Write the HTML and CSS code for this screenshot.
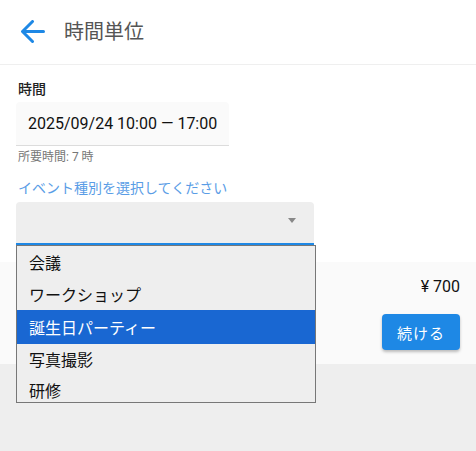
FILE: index.html
```html
<!DOCTYPE html>
<html lang="ja">
<head>
<meta charset="utf-8">
<link rel="stylesheet" href="styles.css">
</head>
<body>
<div class="page">
  <header class="topbar">
    <svg class="back" width="24" height="24" viewBox="0 0 24 24" aria-hidden="true">
      <path d="M2 11.5H22.5M11.5 1.5L1.5 11.5L11.5 21.5" fill="none" stroke="#1e88e5" stroke-width="3" stroke-linecap="round" stroke-linejoin="round"/>
    </svg>
    <h1 class="title">時間単位</h1>
  </header>

  <main class="content">
    <label class="field-label">時間</label>
    <div class="time-box">2025/09/24 10:00 — 17:00</div>
    <div class="helper">所要時間: 7 時</div>

    <div class="event-label">イベント種別を選択してください</div>
    <div class="select-wrap">
      <div class="select">
        <span class="caret"></span>
      </div>
      <ul class="dropdown">
        <li class="option">会議</li>
        <li class="option">ワークショップ</li>
        <li class="option is-selected">誕生日パーティー</li>
        <li class="option">写真撮影</li>
        <li class="option">研修</li>
      </ul>
    </div>
  </main>

  <section class="footer">
    <div class="price">¥ 700</div>
    <button class="continue">続ける</button>
  </section>
  <div class="filler"></div>
</div>
</body>
</html>
```

FILE: styles.css
```css
* { box-sizing: border-box; }
html, body {
  margin: 0;
  padding: 0;
  background: #eeeeee;
  font-family: Roboto, "Noto Sans CJK JP", sans-serif;
  color: #111;
}
.page {
  width: 476px;
  min-height: 451px;
  display: flex;
  flex-direction: column;
  background: #eeeeee;
}
.topbar {
  height: 65px;
  flex: none;
  background: #fff;
  border-bottom: 1px solid #efefef;
  display: flex;
  align-items: center;
  padding-left: 21px;
}
.back {
  display: block;
  margin-top: -1px;
}
.title {
  margin: 0 0 0 19px;
  font-size: 20px;
  font-weight: 400;
  color: #555;
  line-height: 28px;
}
.content {
  flex: none;
  background: #fff;
  padding: 14px 16px 17px;
}
.field-label {
  display: block;
  margin-left: 2px;
  font-size: 14px;
  line-height: 20px;
  font-weight: 500;
  color: #222;
  margin-bottom: 3px;
}
.time-box {
  display: inline-block;
  height: 44px;
  padding: 0 12px;
  line-height: 43px;
  font-size: 16px;
  background: #fafafa;
  border-bottom: 1px solid #dcdcdc;
  border-radius: 4px 4px 0 0;
  color: #111;
}
.helper {
  margin: 3px 0 0 2px;
  font-size: 12px;
  line-height: 16px;
  color: #777;
}
.event-label {
  margin: 13px 0 0 2px;
  font-size: 14px;
  line-height: 20px;
  color: #5a9de6;
}
.select-wrap {
  position: relative;
  width: 298px;
  margin-top: 4px;
  z-index: 10;
}
.select {
  height: 43px;
  background: #eeeeee;
  border-radius: 4px 4px 0 0;
  border-bottom: 2px solid #1e88e5;
  position: relative;
}
.caret {
  position: absolute;
  right: 18px;
  top: 16px;
  width: 0;
  height: 0;
  border-left: 4px solid transparent;
  border-right: 4px solid transparent;
  border-top: 5px solid #888;
}
.dropdown {
  position: absolute;
  left: 0;
  top: 43px;
  width: 300px;
  height: 158px;
  margin: 0;
  padding: 0;
  list-style: none;
  background: #eeeeee;
  border: 1px solid #777;
  overflow: hidden;
  font-family: "Noto Sans CJK JP", sans-serif;
}
.option {
  height: 31px;
  line-height: 31px;
  padding-left: 12px;
  font-size: 16px;
  color: #111;
}
.option:first-child {
  height: 33px;
  line-height: 33px;
}
.option.is-selected {
  height: 34px;
  line-height: 34px;
  background: #1967d2;
  color: #fff;
}
.footer {
  flex: none;
  height: 102px;
  background: #fafafa;
  padding: 14px 16px 0;
  display: flex;
  flex-direction: column;
  align-items: flex-end;
}
.price {
  font-size: 16px;
  line-height: 22px;
  color: #111;
}
.continue {
  margin-top: 16px;
  width: 78px;
  height: 36px;
  border: none;
  border-radius: 4px;
  background: #1e88e5;
  color: #fff;
  font-family: Roboto, "Noto Sans CJK JP", sans-serif;
  font-size: 15px;
  letter-spacing: 1px;
  box-shadow: 0 2px 3px rgba(0,0,0,0.25);
  padding: 0;
}
.filler {
  flex: 1;
  background: #eeeeee;
}
```
